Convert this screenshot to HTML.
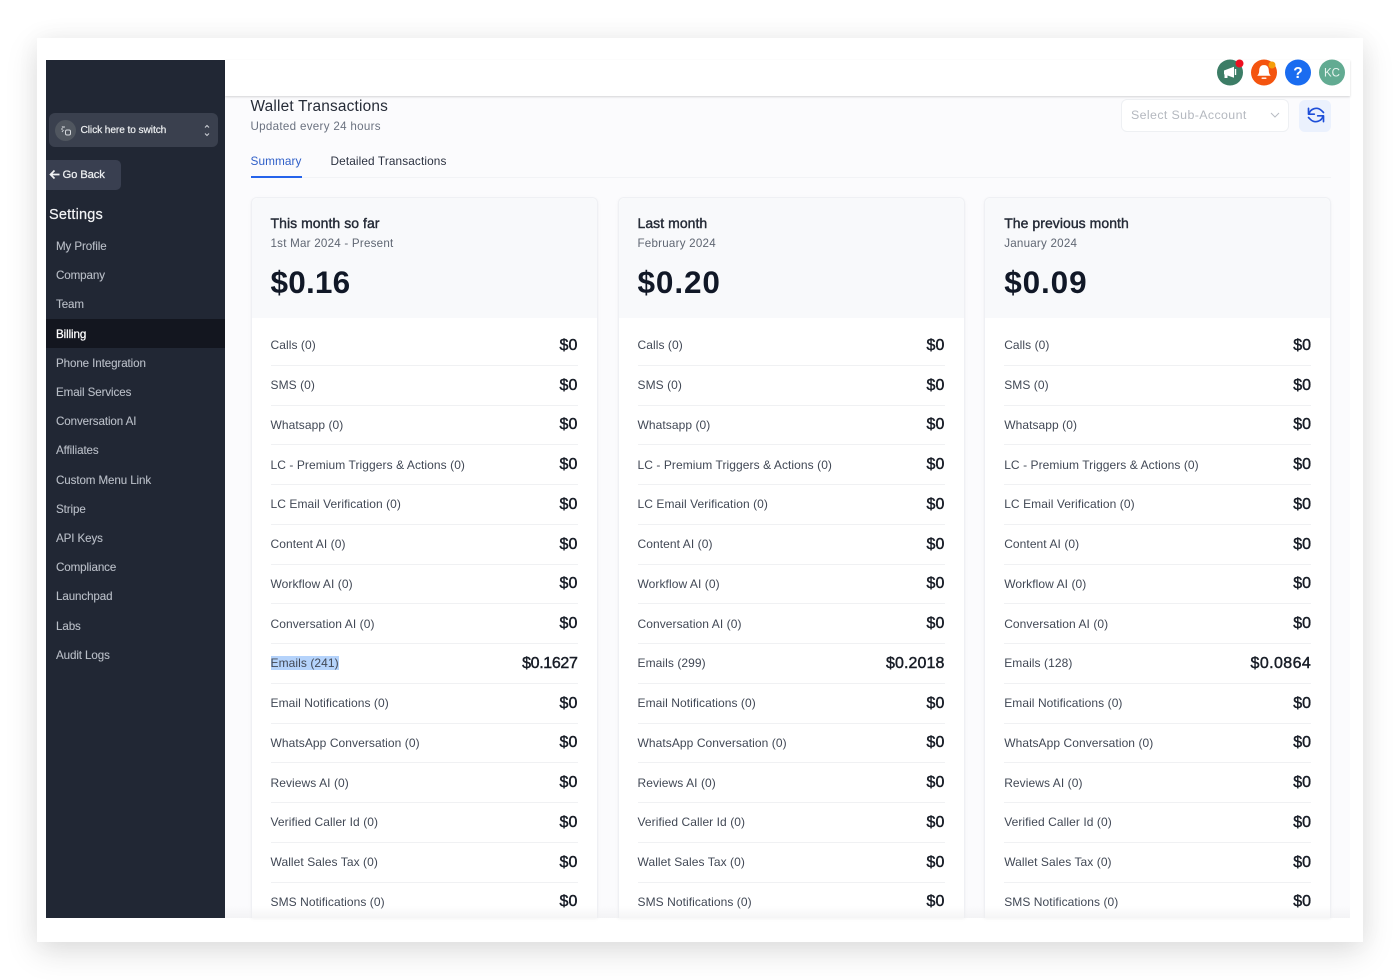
<!DOCTYPE html>
<html><head><meta charset="utf-8"><style>
*{box-sizing:border-box;margin:0;padding:0}
html,body{width:1400px;height:980px;overflow:hidden;background:#fff;font-family:"Liberation Sans",sans-serif}
.abs,.outer,.app,.side,.main,.hdr,.card{position:absolute}
.outer{left:37px;top:38px;width:1326px;height:904px;background:#fff;box-shadow:0 10px 30px rgba(0,0,0,.13),0 0 24px rgba(0,0,0,.04)}
.side{left:46px;top:60px;width:178.500px;height:858px;background:#212734}
.main{left:224.500px;top:60px;width:1125.500px;height:858px;background:#fbfbfd;overflow:hidden}
.hdr{left:224.500px;top:60px;width:1125.500px;height:35.500px;background:#fff;box-shadow:0 1px 2px rgba(0,0,0,.16);z-index:3}
.t{position:absolute;white-space:nowrap}
.nav{position:absolute;left:10px;font-size:11.600px;color:#b9bec7;white-space:nowrap;line-height:14px;letter-spacing:-.1px;-webkit-text-stroke:.1px #b9bec7}
.card{top:197px;height:721px;width:347px;overflow:hidden;background:#fff;border:1px solid #eff0f4;border-bottom:0;border-radius:6px 6px 0 0;box-shadow:0 1px 3px rgba(16,24,40,.05)}
.ch{height:120px;margin-bottom:8px;background:#f8f9fb;position:relative;border-radius:6px 6px 0 0}
.ch b{position:absolute;left:19px;top:17px;font-size:14px;color:#252b37;font-weight:normal;-webkit-text-stroke:.4px #252b37;white-space:nowrap;line-height:17px;letter-spacing:.05px}
.ch span{position:absolute;left:19px;top:39px;font-size:11.600px;color:#5f6672;white-space:nowrap;line-height:14px;letter-spacing:.23px}
.ch i{position:absolute;left:19px;top:65px;font-style:normal;font-size:31.500px;font-weight:bold;color:#111827;line-height:38px;white-space:nowrap;letter-spacing:.9px}
.r{display:flex;justify-content:space-between;align-items:center;height:39.750px;margin:0 19px;border-bottom:1px solid #f0f1f3;font-size:12px;color:#414855;letter-spacing:.07px}
.r b{font-size:16px;color:#181d27;letter-spacing:.1px;font-weight:normal;-webkit-text-stroke:.45px #181d27;position:relative;top:.5px}
.sel{background:#b5d3fb}
.fade{position:absolute;left:224.500px;top:906px;width:1125.500px;height:12px;background:linear-gradient(rgba(240,240,242,0),rgba(238,238,240,.6));z-index:2}
</style></head><body>
<div class="outer"></div>
<div class="main">
<div class="t" style="left:26px;top:38px;font-size:15.400px;line-height:18px;color:#252b37;letter-spacing:.2px">Wallet Transactions</div>
<div class="t" style="left:26px;top:59px;font-size:11.600px;line-height:15px;color:#6b7280;letter-spacing:.3px">Updated every 24 hours</div>
<div class="t" style="left:26px;top:94px;font-size:11.800px;line-height:15px;color:#2f5fc8;letter-spacing:.08px">Summary</div>
<div class="t" style="left:106px;top:94px;font-size:11.800px;line-height:15px;color:#2b3140;letter-spacing:.12px">Detailed Transactions</div>
<div class="abs" style="left:26px;top:117px;width:1080px;height:1px;background:#f2f3f6"></div>
<div class="abs" style="left:26px;top:116px;width:51px;height:2px;background:#2563eb"></div>
<div class="abs" style="left:896.500px;top:39px;width:168px;height:33px;background:#fff;border:1px solid #eef0f3;border-radius:6px"></div>
<div class="t" style="left:906.500px;top:47.500px;font-size:12.400px;line-height:15px;color:#b4b8bf;letter-spacing:.38px">Select Sub-Account</div>
<svg class="abs" style="left:1044.500px;top:50px" width="12" height="10" viewBox="0 0 12 10"><path d="M2 3l4 4 4-4" fill="none" stroke="#b8bcc3" stroke-width="1"/></svg>
<div class="abs" style="left:1074.500px;top:40px;width:32px;height:32px;background:#ebf1fd;border-radius:6px"></div>
<svg class="abs" style="left:1081px;top:45px" width="20" height="20" viewBox="0 0 24 24" fill="none" stroke="#1d4ed8" stroke-width="2" stroke-linecap="round" stroke-linejoin="round"><path d="M3 4v7h7"/><path d="M21 20v-7h-7"/><path d="M3.500 11a9 9 0 0 1 15-4.500L21 9"/><path d="M20.500 13a9 9 0 0 1-15 4.500L3 15"/></svg>
</div>

<div class="hdr"></div>
<svg class="abs" style="left:1210px;top:52px;z-index:4" width="145" height="40" viewBox="1210 52 145 40">
<circle cx="1230" cy="72.500" r="13" fill="#3c7d66"/>
<path d="M1224 70.500l10-3.800v11l-10-3.500z" fill="#fff"/><rect x="1224.500" y="72" width="3" height="6" fill="#fff"/><path d="M1235.500 69v6" stroke="#fff" stroke-width="1.400"/>
<circle cx="1239.500" cy="63.500" r="4" fill="#ee0f1f"/>
<circle cx="1264" cy="72.500" r="13" fill="#f4540f"/>
<path d="M1264 65c-3.500 0-4.800 2.800-4.800 5.500 0 3-1.200 4.300-2 5.300h13.600c-.8-1-2-2.300-2-5.300 0-2.700-1.300-5.500-4.800-5.500z" fill="#fff"/><rect x="1261.500" y="77.500" width="5" height="1.400" rx=".7" fill="#fff"/>
<circle cx="1272" cy="65" r="3.500" fill="#f59e0b"/>
<circle cx="1298" cy="72.500" r="13" fill="#1a6cf0"/>
<text x="1298" y="78" text-anchor="middle" font-family="Liberation Sans" font-weight="bold" font-size="15.500" fill="#fff">?</text>
<circle cx="1332" cy="72.500" r="13" fill="#62ab92"/>
<text x="1332" y="76.500" text-anchor="middle" font-family="Liberation Sans" font-size="11.500" fill="#e8f4ef">KC</text>
</svg>

<div class="side">
<div class="abs" style="left:3px;top:53px;width:169px;height:34px;background:#3a404e;border-radius:6px"></div>
<div class="abs" style="left:9px;top:60px;width:21px;height:21px;background:#50565f;border-radius:50%"></div>
<svg class="abs" style="left:14px;top:65px" width="12" height="12" viewBox="0 0 12 12" fill="none" stroke="#d5d8dc" stroke-width="1"><path d="M2 1.500l1 1M1 4h2M4 1v2M3.500 5L2 7"/><rect x="5.500" y="5" width="5" height="5" rx="1.500"/></svg>
<div class="t" style="left:34.500px;top:63.500px;font-size:10.200px;line-height:14px;color:#eceef0;letter-spacing:-.1px;-webkit-text-stroke:.2px #eceef0">Click here to switch</div>
<svg class="abs" style="left:155px;top:63px" width="12" height="15" viewBox="0 0 12 15" fill="none" stroke="#c9ccd2" stroke-width="1.100"><path d="M4 4.500l2-2 2 2M4 10.500l2 2 2-2"/></svg>
<div class="abs" style="left:0;top:100px;width:75px;height:30px;background:#393f50;border-radius:0 5px 5px 0"></div>
<svg class="abs" style="left:3px;top:108px" width="11" height="13" viewBox="0 0 11 13" fill="none" stroke="#f1f2f4" stroke-width="1.700"><path d="M10.500 6.500H1.500M5.500 2.500l-4 4 4 4"/></svg>
<div class="t" style="left:16.500px;top:108px;font-size:11.300px;line-height:15px;color:#eceef0;letter-spacing:-.15px;-webkit-text-stroke:.25px #eceef0">Go Back</div>
<div class="t" style="left:3px;top:145.500px;font-size:14.500px;line-height:18px;color:#f3f4f6;letter-spacing:.2px;-webkit-text-stroke:.2px #f3f4f6">Settings</div>
<div class="abs" style="left:0;top:259px;width:178.500px;height:29px;background:#13161f"></div>
<div class="nav" style="top:179.500px">My Profile</div>
<div class="nav" style="top:209px">Company</div>
<div class="nav" style="top:238px">Team</div>
<div class="nav" style="top:267.500px;color:#fff;-webkit-text-stroke:.25px #fff">Billing</div>
<div class="nav" style="top:296.500px">Phone Integration</div>
<div class="nav" style="top:325.500px">Email Services</div>
<div class="nav" style="top:354.500px">Conversation AI</div>
<div class="nav" style="top:384px">Affiliates</div>
<div class="nav" style="top:413.500px">Custom Menu Link</div>
<div class="nav" style="top:442.500px">Stripe</div>
<div class="nav" style="top:471.500px">API Keys</div>
<div class="nav" style="top:500.500px">Compliance</div>
<div class="nav" style="top:530px">Launchpad</div>
<div class="nav" style="top:559.500px">Labs</div>
<div class="nav" style="top:588.500px">Audit Logs</div>
</div>

<div class="card" style="left:250.500px">
<div class="ch"><b>This month so far</b><span>1st Mar 2024 - Present</span><i style="letter-spacing:.2px">$0.16</i></div>
<div class="r"><span>Calls (0)</span><b>$0</b></div>
<div class="r"><span>SMS (0)</span><b>$0</b></div>
<div class="r"><span>Whatsapp (0)</span><b>$0</b></div>
<div class="r"><span>LC - Premium Triggers &amp; Actions (0)</span><b>$0</b></div>
<div class="r"><span>LC Email Verification (0)</span><b>$0</b></div>
<div class="r"><span>Content AI (0)</span><b>$0</b></div>
<div class="r"><span>Workflow AI (0)</span><b>$0</b></div>
<div class="r"><span>Conversation AI (0)</span><b>$0</b></div>
<div class="r"><span class="sel">Emails (241)</span><b style="letter-spacing:-.35px">$0.1627</b></div>
<div class="r"><span>Email Notifications (0)</span><b>$0</b></div>
<div class="r"><span>WhatsApp Conversation (0)</span><b>$0</b></div>
<div class="r"><span>Reviews AI (0)</span><b>$0</b></div>
<div class="r"><span>Verified Caller Id (0)</span><b>$0</b></div>
<div class="r"><span>Wallet Sales Tax (0)</span><b>$0</b></div>
<div class="r"><span>SMS Notifications (0)</span><b>$0</b></div>
</div>

<div class="card" style="left:617.500px">
<div class="ch"><b>Last month</b><span>February 2024</span><i>$0.20</i></div>
<div class="r"><span>Calls (0)</span><b>$0</b></div>
<div class="r"><span>SMS (0)</span><b>$0</b></div>
<div class="r"><span>Whatsapp (0)</span><b>$0</b></div>
<div class="r"><span>LC - Premium Triggers &amp; Actions (0)</span><b>$0</b></div>
<div class="r"><span>LC Email Verification (0)</span><b>$0</b></div>
<div class="r"><span>Content AI (0)</span><b>$0</b></div>
<div class="r"><span>Workflow AI (0)</span><b>$0</b></div>
<div class="r"><span>Conversation AI (0)</span><b>$0</b></div>
<div class="r"><span>Emails (299)</span><b>$0.2018</b></div>
<div class="r"><span>Email Notifications (0)</span><b>$0</b></div>
<div class="r"><span>WhatsApp Conversation (0)</span><b>$0</b></div>
<div class="r"><span>Reviews AI (0)</span><b>$0</b></div>
<div class="r"><span>Verified Caller Id (0)</span><b>$0</b></div>
<div class="r"><span>Wallet Sales Tax (0)</span><b>$0</b></div>
<div class="r"><span>SMS Notifications (0)</span><b>$0</b></div>
</div>

<div class="card" style="left:984.200px">
<div class="ch"><b>The previous month</b><span>January 2024</span><i>$0.09</i></div>
<div class="r"><span>Calls (0)</span><b>$0</b></div>
<div class="r"><span>SMS (0)</span><b>$0</b></div>
<div class="r"><span>Whatsapp (0)</span><b>$0</b></div>
<div class="r"><span>LC - Premium Triggers &amp; Actions (0)</span><b>$0</b></div>
<div class="r"><span>LC Email Verification (0)</span><b>$0</b></div>
<div class="r"><span>Content AI (0)</span><b>$0</b></div>
<div class="r"><span>Workflow AI (0)</span><b>$0</b></div>
<div class="r"><span>Conversation AI (0)</span><b>$0</b></div>
<div class="r"><span>Emails (128)</span><b style="letter-spacing:.4px">$0.0864</b></div>
<div class="r"><span>Email Notifications (0)</span><b>$0</b></div>
<div class="r"><span>WhatsApp Conversation (0)</span><b>$0</b></div>
<div class="r"><span>Reviews AI (0)</span><b>$0</b></div>
<div class="r"><span>Verified Caller Id (0)</span><b>$0</b></div>
<div class="r"><span>Wallet Sales Tax (0)</span><b>$0</b></div>
<div class="r"><span>SMS Notifications (0)</span><b>$0</b></div>
</div>
<div class="fade"></div>
</body></html>
